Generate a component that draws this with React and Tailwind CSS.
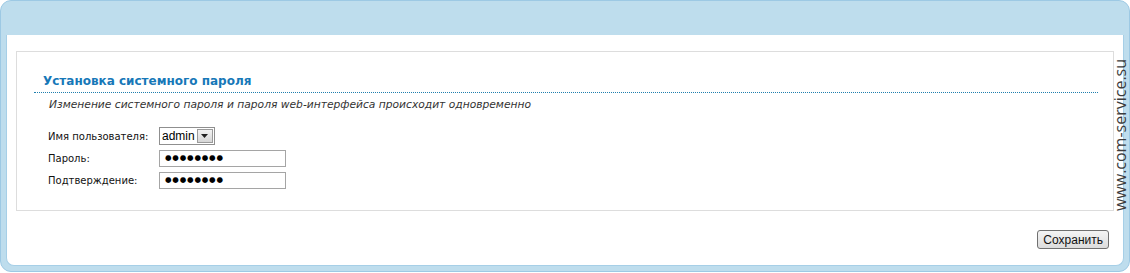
import React from 'react';

const font = { fontFamily: '"DejaVu Sans", Verdana, sans-serif' };

const Field = ({ label, children }) => (
  <div className="flex items-center h-[22px]">
    <span className="w-[111px] text-[10px] text-[#111]">{label}</span>
    {children}
  </div>
);

const PasswordBox = () => (
  <div className="w-[127px] h-[17px] border border-[#a5a5a5] bg-white flex items-center pl-[5px] text-[7.5px] tracking-[0.8px] text-black leading-none">
    ●●●●●●●●
  </div>
);

export default function App() {
  return (
    <div className="w-[1130px] h-[273px] bg-white" style={font}>
      <div className="relative h-[272px] rounded-[11px] border border-[#9dc9e4] bg-[#bedded] pt-[34px] px-[5px] pb-[5px] flex flex-col">
        <div className="flex-1 bg-white rounded-b-[8px] border border-[#a6cfe7] border-t-0 flex flex-col pl-[9px] pr-[9px] pt-[16px]">
          {/* Section box */}
          <div className="h-[160px] border border-[#dddddd] pl-[17px] pr-[15px] pt-[21px]">
            <div className="pl-[9px] text-[12px] font-bold text-[#1778b8] leading-[16px]">
              Установка системного пароля
            </div>
            <div className="mt-[3px] border-t border-dotted border-[#1f7fae]" />
            <div className="pl-[15px] pt-[4px] text-[10.7px] italic text-[#333] leading-[16px]">
              Изменение системного пароля и пароля web-интерфейса происходит одновременно
            </div>
            <div className="pl-[14px] pt-[12px] flex flex-col">
              <Field label="Имя пользователя:">
                <div className="h-[18px] flex items-center border border-[#8f8f8f] bg-white">
                  <span className="px-[2px] text-[12px] text-black leading-none" style={{ fontFamily: '"Liberation Sans", Arial, sans-serif' }}>admin</span>
                  <span className="w-[16px] h-[14px] mr-[1px] bg-gradient-to-b from-[#f3f3f3] to-[#d6d6d6] border border-[#9a9a9a] flex items-center justify-center">
                    <svg width="7" height="4" viewBox="0 0 7 4"><path d="M0 0h7L3.5 4z" fill="#222" /></svg>
                  </span>
                </div>
              </Field>
              <Field label="Пароль:">
                <PasswordBox />
              </Field>
              <Field label="Подтверждение:">
                <PasswordBox />
              </Field>
            </div>
          </div>
          {/* Buttons */}
          <div className="flex justify-end pt-[19px] pr-[5px]">
            <button
              className="h-[19px] px-[5px] text-[12px] text-[#111] leading-none rounded-[3px] border border-[#707070] bg-gradient-to-b from-[#f4f4f4] to-[#dcdcdc]"
              style={{ fontFamily: '"Liberation Sans", Arial, sans-serif' }}
            >
              Сохранить
            </button>
          </div>
        </div>
        <div className="absolute right-[1px] top-[52px] h-[164px] w-[16px] flex items-center justify-center">
          <span className="block -rotate-90 whitespace-nowrap text-[16px] text-[#3c3c3c] leading-none" style={{ fontFamily: '"Open Sans", "DejaVu Sans", sans-serif' }}>
            www.com-service.su
          </span>
        </div>
      </div>
    </div>
  );
}
